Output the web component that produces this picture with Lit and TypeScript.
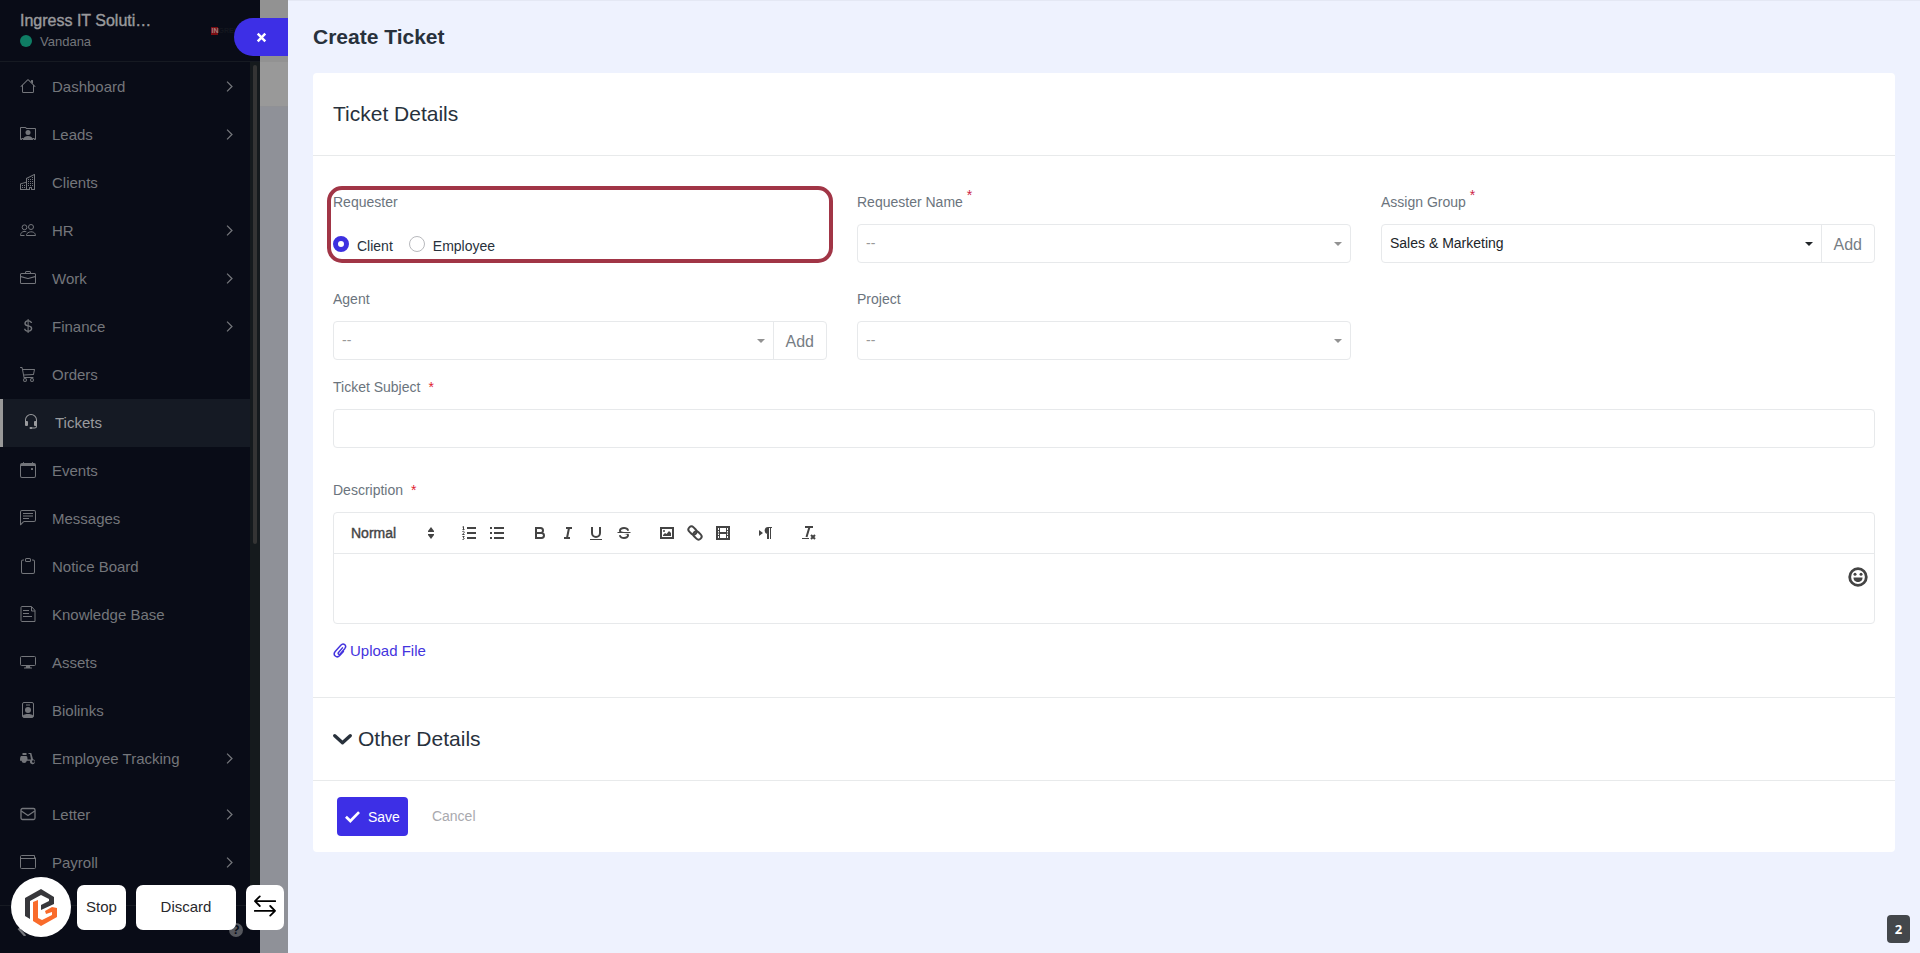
import { LitElement, html, css, svg, nothing } from "lit";
import { customElement, property } from "lit/decorators.js";
import { classMap } from "lit/directives/class-map.js";

const icons: Record<string, unknown> = {
  house: svg`<path fill-rule="evenodd" d="M2 13.5V7h1v6.500a.5.5 0 0 0 .5.5h9a.5.5 0 0 0 .5-.5V7h1v6.500a1.500 1.500 0 0 1-1.500 1.500h-9A1.500 1.500 0 0 1 2 13.500zm11-11V6l-2-2V2.500a.5.5 0 0 1 .5-.5h1a.5.5 0 0 1 .5.5z"/><path d="M7.293 1.500a1 1 0 0 1 1.414 0l6.647 6.646a.5.5 0 0 1-.708.708L8 2.207 1.354 8.854a.5.5 0 1 1-.708-.708z"/>`,
  leads: svg`<path d="M8 9.050a2.500 2.500 0 1 0 0-5 2.500 2.500 0 0 0 0 5Z"/><path d="M1 1a1 1 0 0 0-1 1v11a1 1 0 0 0 1 1h.5a.5.5 0 0 0 .5-.5.5.5 0 0 1 1 0 .5.5 0 0 0 .5.5h9a.5.5 0 0 0 .5-.5.5.5 0 0 1 1 0 .5.5 0 0 0 .5.5h.5a1 1 0 0 0 1-1V3a1 1 0 0 0-1-1H6.707L6 1.293A1 1 0 0 0 5.293 1H1Zm0 1h4.293L6 2.707A1 1 0 0 0 6.707 3H15v10h-.085a1.500 1.500 0 0 0-2.400-.63C11.885 11.223 10.554 10 8 10c-2.555 0-3.886 1.224-4.514 2.370a1.500 1.500 0 0 0-2.400.63H1V2Z"/>`,
  building: svg`<path fill-rule="evenodd" d="M14.763.075A.5.5 0 0 1 15 .5v15a.5.5 0 0 1-.5.5h-3a.5.5 0 0 1-.5-.5V14h-1v1.500a.5.5 0 0 1-.5.5h-9a.5.5 0 0 1-.5-.5V10a.5.5 0 0 1 .342-.474L6 7.640V4.500a.5.5 0 0 1 .276-.447l8-4a.5.5 0 0 1 .487.022zM6 8.694 1 10.360V15h5V8.694zM7 15h2v-1.500a.5.5 0 0 1 .5-.5h2a.5.5 0 0 1 .5.5V15h2V1.309l-7 3.500V15z"/><path d="M2 11h1v1H2v-1zm2 0h1v1H4v-1zm-2 2h1v1H2v-1zm2 0h1v1H4v-1zm4-4h1v1H8V9zm2 0h1v1h-1V9zm-2 2h1v1H8v-1zm2 0h1v1h-1v-1zm2-2h1v1h-1V9zm0 2h1v1h-1v-1zM8 7h1v1H8V7zm2 0h1v1h-1V7zm2 0h1v1h-1V7zM8 5h1v1H8V5zm2 0h1v1h-1V5zm2 0h1v1h-1V5zm0-2h1v1h-1V3z"/>`,
  people: svg`<g fill="none" stroke="currentColor"><circle cx="4.500" cy="5.300" r="2.400"/><circle cx="11" cy="5" r="2.500"/><path d="M6.500 13.500c-.6-3.800 8.400-6 9 0zM6.300 9.700C3 8.800.5 10.500.5 13.500h4"/></g>`,
  briefcase: svg`<path d="M6.500 1A1.500 1.500 0 0 0 5 2.500V3H1.500A1.500 1.500 0 0 0 0 4.500v8A1.500 1.500 0 0 0 1.500 14h13a1.500 1.500 0 0 0 1.500-1.500v-8A1.500 1.500 0 0 0 14.500 3H11v-.5A1.500 1.500 0 0 0 9.500 1h-3zm0 1h3a.5.5 0 0 1 .5.5V3H6v-.5a.5.5 0 0 1 .5-.5zm1.886 6.914L15 7.151V12.500a.5.5 0 0 1-.5.5h-13a.5.5 0 0 1-.5-.5V7.150l6.614 1.764a1.500 1.500 0 0 0 .772 0zM1.500 4h13a.5.5 0 0 1 .5.5v1.616L8.129 7.948a.5.5 0 0 1-.258 0L1 6.116V4.500a.5.5 0 0 1 .5-.5z"/>`,
  dollar: svg`<path d="M4 10.781c.148 1.667 1.513 2.850 3.591 3.003V15h1.043v-1.216c2.270-.179 3.678-1.438 3.678-3.300 0-1.590-.947-2.510-2.956-3.028l-.722-.187V3.467c1.122.110 1.879.714 2.070 1.616h1.470c-.166-1.600-1.540-2.748-3.540-2.875V1H7.591v1.233c-1.939.230-3.270 1.472-3.270 3.156 0 1.454.966 2.483 2.661 2.917l.610.162v4.031c-1.149-.170-1.940-.800-2.131-1.718H4zm3.391-3.836c-1.043-.263-1.600-.825-1.600-1.616 0-.944.704-1.641 1.800-1.828v3.495l-.2-.05zm1.591 1.872c1.287.323 1.852.859 1.852 1.769 0 1.097-.826 1.828-2.200 1.939V8.730l.348.086z"/>`,
  cart: svg`<path d="M0 1.500A.5.5 0 0 1 .5 1H2a.5.5 0 0 1 .485.379L2.890 3H14.500a.5.5 0 0 1 .490.598l-1 5a.5.5 0 0 1-.465.401l-9.397.472L4.415 11H13a.5.5 0 0 1 0 1H4a.5.5 0 0 1-.491-.408L2.010 3.607 1.610 2H.5a.5.5 0 0 1-.5-.5zM3.102 4l.840 4.479 9.144-.459L13.890 4H3.102zM5 12a2 2 0 1 0 0 4 2 2 0 0 0 0-4zm7 0a2 2 0 1 0 0 4 2 2 0 0 0 0-4zm-7 1a1 1 0 1 1 0 2 1 1 0 0 1 0-2zm7 0a1 1 0 1 1 0 2 1 1 0 0 1 0-2z"/>`,
  headset: svg`<path d="M8 1a5 5 0 0 0-5 5v1h1a1 1 0 0 1 1 1v3a1 1 0 0 1-1 1H3a1 1 0 0 1-1-1V6a6 6 0 1 1 12 0v6a2.500 2.500 0 0 1-2.500 2.500H9.366a1 1 0 0 1-.866.5h-1a1 1 0 1 1 0-2h1a1 1 0 0 1 .866.5H11.500A1.500 1.500 0 0 0 13 12h-1a1 1 0 0 1-1-1V8a1 1 0 0 1 1-1h1V6a5 5 0 0 0-5-5z"/>`,
  calendar: svg`<path d="M11 6.500a.5.5 0 0 1 .5-.5h1a.5.5 0 0 1 .5.5v1a.5.5 0 0 1-.5.5h-1a.5.5 0 0 1-.5-.5v-1z"/><path d="M3.500 0a.5.5 0 0 1 .5.5V1h8V.5a.5.5 0 0 1 1 0V1h1a2 2 0 0 1 2 2v11a2 2 0 0 1-2 2H2a2 2 0 0 1-2-2V3a2 2 0 0 1 2-2h1V.5a.5.5 0 0 1 .5-.5zM1 4v10a1 1 0 0 0 1 1h12a1 1 0 0 0 1-1V4H1z"/>`,
  chat: svg`<path d="M14 1a1 1 0 0 1 1 1v8a1 1 0 0 1-1 1H4.414A2 2 0 0 0 3 11.586l-2 2V2a1 1 0 0 1 1-1h12zM2 0a2 2 0 0 0-2 2v12.793a.5.5 0 0 0 .854.353l2.853-2.853A1 1 0 0 1 4.414 12H14a2 2 0 0 0 2-2V2a2 2 0 0 0-2-2H2z"/><path d="M3 3h10v1H3zM3 5.500h10v1H3zM3 8h6v1H3z"/>`,
  clipboard: svg`<path d="M4 1.500H3a2 2 0 0 0-2 2V14a2 2 0 0 0 2 2h10a2 2 0 0 0 2-2V3.500a2 2 0 0 0-2-2h-1v1h1a1 1 0 0 1 1 1V14a1 1 0 0 1-1 1H3a1 1 0 0 1-1-1V3.500a1 1 0 0 1 1-1h1v-1z"/><path d="M9.500 1a.5.5 0 0 1 .5.5v1a.5.5 0 0 1-.5.5h-3a.5.5 0 0 1-.5-.5v-1a.5.5 0 0 1 .5-.5h3zm-3-1A1.500 1.500 0 0 0 5 1.500v1A1.500 1.500 0 0 0 6.500 4h3A1.500 1.500 0 0 0 11 2.500v-1A1.500 1.500 0 0 0 9.500 0h-3z"/>`,
  doc: svg`<g fill="none" stroke="currentColor"><path d="M2 .5h9.500l3.500 4v11H2a1 1 0 0 1-1-1v-13a1 1 0 0 1 1-1z"/><path d="M11.500.8V5H15M3 4.500h6M3 7.500h6M3 10.500h9"/></g>`,
  display: svg`<path fill="none" stroke="currentColor" d="M1.500 2.500h13a1 1 0 0 1 1 1v7a1 1 0 0 1-1 1h-13a1 1 0 0 1-1-1v-7a1 1 0 0 1 1-1z"/><path d="M6 12h4l.3 1.500H12v1H4v-1h1.700z"/>`,
  badge: svg`<rect x="2.500" y=".5" width="11" height="15" rx="1.500" fill="none" stroke="currentColor"/><path d="M6 2.500h4v1H6zM3 13.500c1-2 9-2 10 0V15H3z"/><circle cx="8" cy="8" r="3"/>`,
  scooter: svg`<path d="M2.500 3h4v2h-4zM1 6h5c1.200 0 1.500 1 1.500 3.500H11L10 4H8.500V3h2.800L13 9.200a2.500 2.500 0 1 1-2.800 1.500H6.800a2.700 2.700 0 0 1-5.300 0H0C0 8 .2 7 1 6z"/><circle cx="13.300" cy="11.500" r="1.300" fill="#090c17"/>`,
  letter: svg`<g fill="none" stroke="currentColor" stroke-width="1.300"><rect x="1" y="2.500" width="14" height="11" rx="1.500"/><path d="m1.300 5 6.700 4.500L14.700 5"/></g>`,
  payroll: svg`<path fill="none" stroke="currentColor" d="M15.500 3.500v10a1 1 0 0 1-1 1h-13a1 1 0 0 1-1-1v-11a1 1 0 0 1 1-1h13v3M.5 4.500h15"/>`,
  chevron: svg`<path fill="none" stroke="currentColor" stroke-width="1.600" d="m5 2 6 6-6 6"/>`,
  collapse: svg`<path fill="none" stroke="currentColor" stroke-width="3" d="M11 2 3 7l8 9"/>`,
  close: svg`<path fill="none" stroke="currentColor" stroke-width="3.600" d="m2.500 2.500 11 11M13.500 2.500l-11 11"/>`,
  arrows: svg`<path fill="none" stroke="currentColor" stroke-width="1.300" stroke-linecap="round" stroke-linejoin="round" d="M15.500 4.500H.8m3.400-3.500L.7 4.500l3.500 3.500M.5 11.500h14.700M11.800 8l3.500 3.500-3.500 3.500"/>`,
  clip: svg`<path fill="none" stroke="currentColor" stroke-width="1.700" stroke-linecap="round" stroke-linejoin="round" d="M10.800 5 6.300 10.200c-1.200 1.600 .7 3 1.900 1.700l5.200-6c3-3.800-1.600-7.200-4.500-4L2.500 9.200c-3.200 4 1.700 8.200 5.200 4.600l4.200-4.700"/>`,
  down: svg`<path fill="none" stroke="currentColor" stroke-width="2.800" stroke-linecap="round" stroke-linejoin="round" d="m1.500 4.800 6.500 6 6.500-6"/>`,
  check: svg`<path fill="none" stroke="currentColor" stroke-width="2.900" d="m1 8.300 4.700 4.500L15 3.300"/>`,
};

const quill: Record<string, unknown> = {
  ordered: svg`<path class="st" d="M7 4h9M7 9h9M7 14h9"/><path class="st thin" d="M2.500 5.500h2M3.500 5.500v-3l-1 .5M2.400 7.500c2-.8 2.500.8 1 2l-1 1h2.200M2.500 12.500h1.700l-1 1.400c1.500 0 1.500 1.800-.7 1.600"/>`,
  bullet: svg`<path class="st" d="M6 4h10M6 9h10M6 14h10M2 4h2M2 9h2M2 14h2"/>`,
  bold: svg`<path class="st" d="M5 4h4.500a2.500 2.500 0 0 1 0 5H5zM5 9h5.500a2.500 2.500 0 0 1 0 5H5z"/>`,
  italic: svg`<path class="st" d="M7 4h6M5 14h6M8 14l2-10"/>`,
  underline: svg`<path class="st" d="M5 3v6a4 4 0 0 0 8 0V3"/><path class="st thin" d="M3 15.500h12"/>`,
  strike: svg`<path class="st thin" d="M15.500 8.500h-13"/><path class="fl" d="M9.007 8C6.542 7.791 6 7.519 6 6.500 6 5.792 7.283 5 9 5c1.571 0 2.765.679 2.969 1.309a1 1 0 0 0 1.900-.617C13.356 4.106 11.354 3 9 3 6.200 3 4 4.538 4 6.500a3.200 3.200 0 0 0 .5 1.843ZM8.984 10C11.457 10.208 12 10.479 12 11.500c0 .708-1.283 1.500-3 1.500-1.571 0-2.765-.679-2.969-1.309a1 1 0 1 0-1.900.617C4.644 13.894 6.646 15 9 15c2.800 0 5-1.538 5-3.500a3.200 3.200 0 0 0-.5-1.843Z"/>`,
  image: svg`<rect class="st" x="3" y="4" width="12" height="10"/><circle class="fl" cx="6" cy="7" r="1"/><path class="fl" d="M5 12v-1l2-2 1.500 1L11 7l2 2v3z"/>`,
  link: svg`<g transform="rotate(45 9 9)"><rect class="st" x="1" y="6" width="9" height="6" rx="3"/><rect class="st" x="8" y="6" width="9" height="6" rx="3"/></g>`,
  video: svg`<rect class="st" x="3" y="3" width="12" height="12"/><path class="st thin" d="M5.500 3v12M12.500 3v12M3 6.500h2M3 9h2M3 11.500h2M13 6.500h2M13 9h2M13 11.500h2"/><path class="fl" d="M5 8h8v2H5z"/>`,
  direction: svg`<path class="fl" d="M2 6v6l4-3zM11 4a3 3 0 0 0 0 6zM15 3H11a3.500 3.500 0 0 0-1 6.800V15h2V4h1v11h1V4h1z"/>`,
  clean: svg`<path class="st" d="M5 3h8M6.500 13 9.500 3"/><path class="st thin" d="M2 14.500h7"/><path class="st" d="m11 11 4 4M15 11l-4 4"/>`,
};

@customElement("ui-icon")
export class UiIcon extends LitElement {
  @property() name = "";
  static styles = css`
    :host { display: inline-flex; flex: none; width: 16px; height: 16px; }
    svg { width: 100%; height: 100%; display: block; }
  `;
  render() {
    return html`<svg viewBox="0 0 16 16" fill="currentColor" aria-hidden="true">${icons[this.name]}</svg>`;
  }
}

type Item = { icon: string; text: string; more?: boolean; active?: boolean; spaced?: boolean };
const menu: Item[] = [
  { icon: "house", text: "Dashboard", more: true },
  { icon: "leads", text: "Leads", more: true },
  { icon: "building", text: "Clients" },
  { icon: "people", text: "HR", more: true },
  { icon: "briefcase", text: "Work", more: true },
  { icon: "dollar", text: "Finance", more: true },
  { icon: "cart", text: "Orders" },
  { icon: "headset", text: "Tickets", active: true },
  { icon: "calendar", text: "Events" },
  { icon: "chat", text: "Messages" },
  { icon: "clipboard", text: "Notice Board" },
  { icon: "doc", text: "Knowledge Base" },
  { icon: "display", text: "Assets" },
  { icon: "badge", text: "Biolinks" },
  { icon: "scooter", text: "Employee Tracking", more: true },
  { icon: "letter", text: "Letter", more: true, spaced: true },
  { icon: "payroll", text: "Payroll", more: true },
];

@customElement("app-sidebar")
export class AppSidebar extends LitElement {
  static styles = css`
    :host { display: flex; flex-direction: column; flex: none; width: 260px; height: 100%; overflow: hidden; background: #090c17; color: #74767b; font-size: 15px; }
    .head { display: flex; align-items: center; justify-content: space-between; height: 62px; box-sizing: border-box; flex: none; padding: 0 17px 0 20px; border-bottom: 1px solid #161a22; }
    .company { color: #999a9d; font-size: 16px; line-height: 21px; white-space: nowrap; -webkit-text-stroke: 0.4px currentColor; }
    .user { display: flex; align-items: center; gap: 8px; font-size: 13px; line-height: 21px; }
    .dot { width: 12px; height: 12px; border-radius: 50%; background: #0f7d64; }
    .logo { display: flex; align-items: center; font-size: 7px; line-height: 8px; font-weight: bold; color: #14171f; }
    .logo b { background: #7b0d12; color: #a08080; }
    .scroll { display: flex; flex: 1; min-height: 0; }
    nav { flex: 1; overflow: hidden; padding-top: 1px; }
    a { display: flex; align-items: center; gap: 16px; height: 48px; padding: 0 12px 2px 20px; box-sizing: border-box; color: inherit; text-decoration: none; }
    a span { flex: 1; }
    a.active { background: #151a24; color: #9a9b9e; border-left: 3px solid #999; }
    a.spaced { margin-top: 8px; }
    .more { width: 13px; height: 13px; padding-right: 2px; }
    .track { width: 10px; background: #151a1d; display: flex; justify-content: center; padding-top: 3px; box-sizing: border-box; }
    .thumb { width: 4px; height: 57%; border-radius: 2px; background: #343434; }
    .foot { display: flex; align-items: center; justify-content: space-between; height: 47px; flex: none; padding: 0 17px; border-top: 1px solid #161a22; }
    .foot ui-icon { width: 12px; height: 12px; }
    .help { width: 14px; height: 14px; border-radius: 50%; background: #55575d; color: #090c17; font-size: 12px; line-height: 14px; text-align: center; font-weight: bold; }
  `;
  render() {
    return html`
      <div class="head">
        <div>
          <div class="company">Ingress IT Soluti…</div>
          <div class="user"><i class="dot"></i>Vandana</div>
        </div>
        <div class="logo"><b>IN</b>GRESS</div>
      </div>
      <div class="scroll">
        <nav>
          ${menu.map(
            (m) => html`<a href="#" class=${classMap({ active: !!m.active, spaced: !!m.spaced })}>
              <ui-icon name=${m.icon}></ui-icon><span>${m.text}</span>
              ${m.more ? html`<ui-icon class="more" name="chevron"></ui-icon>` : nothing}
            </a>`
          )}
        </nav>
        <div class="track"><div class="thumb"></div></div>
      </div>
      <div class="foot"><ui-icon name="collapse"></ui-icon><span class="help">?</span></div>
    `;
  }
}

@customElement("ticket-form")
export class TicketForm extends LitElement {
  static styles = css`
    :host { display: block; background: #fff; border-radius: 4px; }
    h2 { display: flex; align-items: center; gap: 6px; height: 82px; margin: 0; padding: 0 20px; font-size: 21px; font-weight: 400; color: #28313c; }
    h2 ui-icon { width: 19px; height: 19px; }
    .body { padding: 36px 20px; border: solid #e8eaeb; border-width: 1px 0; }
    .grid { display: grid; grid-template-columns: repeat(3, minmax(0, 1fr)); gap: 26px 30px; }
    .label { display: flex; width: fit-content; gap: 8px; margin-bottom: 11px; font-size: 14px; line-height: 21px; color: #6b747d; }
    .label i { font-style: normal; color: #e0222f; }
    .label.raised { gap: 4px; }
    .label.raised i { color: #cc2247; line-height: 6px; }
    .subject { margin-top: 17px; }
    .description { margin-top: 32px; }
    .requester { position: relative; }
    .requester::after { content: ""; position: absolute; inset: -6px -6px 0; border: 4px solid #a13546; border-radius: 15px; pointer-events: none; }
    .radios { display: flex; gap: 16px; padding-top: 12px; font-size: 14px; line-height: 20px; color: #28313c; }
    .radios label { display: flex; gap: 8px; align-items: flex-end; }
    .radios input { appearance: none; width: 16px; height: 16px; margin: 0 0 4px; border: 1px solid #b8b9bd; border-radius: 50%; background: #fff; }
    .radios input:checked { border: 5px solid #3d30e0; }
    .control { display: flex; height: 39px; box-sizing: border-box; border: 1px solid #e7e9eb; border-radius: 4px; background: #fff; }
    .pick { display: grid; flex: 1; align-items: center; }
    .pick > * { grid-area: 1 / 1; }
    select { appearance: none; width: 100%; height: 100%; border: 0; background: none; padding: 0 30px 2px 8px; font: inherit; font-size: 14px; color: #999; }
    .filled select { color: #212529; }
    .caret { justify-self: end; margin-right: 8px; border: solid transparent; border-width: 4px 4px 0; border-top-color: #929292; pointer-events: none; }
    .filled .caret { border-top-color: #212529; }
    button { font: inherit; cursor: pointer; border: 0; background: none; padding: 0; }
    .add { flex: none; padding: 3px 12px 0; border-left: 1px solid #e7e9eb; color: #767d84; font-size: 16px; }
    input.text { display: block; width: 100%; height: 39px; box-sizing: border-box; border: 1px solid #e7e9eb; border-radius: 4px; padding: 0 8px; font: inherit; font-size: 14px; }
    .editor { border: 1px solid #e7e9eb; border-radius: 4px; }
    .tools { display: flex; gap: 15px; padding: 8px; height: 24px; border-bottom: 1px solid #e7e9eb; color: #444; }
    .format { display: grid; align-items: center; width: 98px; }
    .format > * { grid-area: 1 / 1; }
    .format select { color: #444; padding: 0 20px 0 9px; -webkit-text-stroke: 0.4px currentColor; }
    .format svg { justify-self: end; pointer-events: none; width: 18px; height: 18px; }
    .group { display: flex; }
    .group button { width: 28px; height: 24px; padding: 3px 5px; box-sizing: border-box; color: #444; }
    .group svg { display: block; width: 18px; height: 18px; }
    .st { fill: none; stroke: currentColor; stroke-width: 2; }
    .thin { stroke-width: 1; }
    .fl { fill: currentColor; }
    .area { display: flex; height: 69px; }
    textarea { flex: 1; min-width: 0; border: 0; outline: 0; resize: none; background: none; font: inherit; padding: 12px 15px; box-sizing: border-box; }
    .emoji { align-self: flex-start; margin: 13px 6px 0 0; width: 20px; height: 20px; color: #444; }
    .emoji svg { display: block; }
    .upload { display: flex; align-items: center; gap: 3px; width: fit-content; margin-top: 16px; font-size: 15px; line-height: 21px; color: #4434de; text-decoration: none; }
    .upload ui-icon { width: 14px; height: 15px; }
    .foot { display: flex; align-items: center; gap: 24px; padding: 16px 24px; border-top: 1px solid #e8eaeb; font-size: 14px; }
    .save { display: flex; align-items: center; gap: 8px; height: 39px; padding: 0 8px; border-radius: 4px; background: #3d2fe6; color: #fff; font-size: 14px; }
    .save ui-icon { width: 15px; height: 15px; }
    .cancel { color: #a9a9ae; text-decoration: none; padding-bottom: 2px; }
  `;

  private picker(id: string, label: string, value: string, opts: { required?: boolean; add?: boolean; filled?: boolean } = {}) {
    return html`<div>
      <label class="label raised" for=${id}>${label}${opts.required ? html`<i>*</i>` : nothing}</label>
      <div class=${classMap({ control: true, filled: !!opts.filled })}>
        <div class="pick"><select id=${id}><option>${value}</option></select><span class="caret"></span></div>
        ${opts.add ? html`<button class="add" type="button">Add</button>` : nothing}
      </div>
    </div>`;
  }

  private tools(names: string[]) {
    return html`<div class="group">
      ${names.map((n) => html`<button type="button" aria-label=${n}><svg viewBox="0 0 18 18">${quill[n]}</svg></button>`)}
    </div>`;
  }

  render() {
    return html`<form>
      <h2>Ticket Details</h2>
      <div class="body">
        <div class="grid">
          <div class="requester" role="radiogroup" aria-labelledby="requester">
            <span class="label" id="requester">Requester</span>
            <div class="radios">
              <label><input type="radio" name="requester" checked />Client</label>
              <label><input type="radio" name="requester" />Employee</label>
            </div>
          </div>
          ${this.picker("name", "Requester Name", "--", { required: true })}
          ${this.picker("group", "Assign Group", "Sales & Marketing", { required: true, add: true, filled: true })}
          ${this.picker("agent", "Agent", "--", { add: true })}
          ${this.picker("project", "Project", "--")}
        </div>
        <div class="subject">
          <label class="label" for="subject">Ticket Subject <i>*</i></label>
          <input class="text" id="subject" type="text" />
        </div>
        <div class="description">
          <label class="label" for="description">Description <i>*</i></label>
          <div class="editor">
            <div class="tools">
              <div class="format">
                <select aria-label="Text style"><option>Normal</option></select>
                <svg viewBox="0 0 18 18"><path class="fl" d="M6 7 9 3l3 4v1H6zM6 11l3 4 3-4v-1H6z" /></svg>
              </div>
              ${this.tools(["ordered", "bullet"])}
              ${this.tools(["bold", "italic", "underline", "strike"])}
              ${this.tools(["image", "link", "video"])}
              ${this.tools(["direction"])}
              ${this.tools(["clean"])}
            </div>
            <div class="area">
              <textarea id="description"></textarea>
              <button class="emoji" type="button" aria-label="Insert emoji">
                <svg viewBox="0 0 20 20" width="20" height="20">
                  <circle cx="10" cy="10" r="8.300" fill="none" stroke="currentColor" stroke-width="2.800" />
                  <circle cx="7" cy="7.300" r="1.500" class="fl" /><circle cx="13" cy="7.300" r="1.500" class="fl" />
                  <path class="fl" d="M5.500 10.500h9c.3 6-9.300 6-9 0z" />
                </svg>
              </button>
            </div>
          </div>
        </div>
        <a class="upload" href="#"><ui-icon name="clip"></ui-icon>Upload File</a>
      </div>
      <h2><ui-icon name="down"></ui-icon>Other Details</h2>
      <div class="foot">
        <button class="save" type="button"><ui-icon name="check"></ui-icon>Save</button>
        <a class="cancel" href="#">Cancel</a>
      </div>
    </form>`;
  }
}

@customElement("app-root")
export class AppRoot extends LitElement {
  static styles = css`
    :host { position: relative; display: flex; height: 100vh; overflow: hidden; font-family: "Liberation Sans", Arial, sans-serif; }
    .dimmed { flex: none; width: 28px; background: #8f9198; }
    .topbar { height: 62px; background: #929292; }
    .filter { height: 44px; background: #999; border-bottom: 1px solid #909195; }
    main { position: relative; flex: 1; min-width: 0; padding: 0 25px; background: #eef2fe; border-top: 1px solid #e4e8f4; box-sizing: border-box; }
    h1 { margin: 0; font-size: 21px; line-height: 72px; color: #28313c; }
    button { font: inherit; font-size: 15px; border: 0; padding: 0; cursor: pointer; color: #28282c; }
    .close { position: absolute; top: 17px; right: 100%; width: 54px; height: 38px; border-radius: 19px 0 0 19px; background: #3d2fe6; color: #fff; }
    .close ui-icon { width: 11px; height: 11px; }
    .recorder { position: absolute; left: 11px; bottom: 16px; display: flex; align-items: center; gap: 10px; }
    .recorder button { height: 45px; padding-bottom: 2px; border-radius: 7px; background: #fff; }
    .mark { display: flex; width: 60px; height: 60px; margin-right: -4px; border-radius: 50%; background: #fff; align-items: center; justify-content: center; }
    .stop { width: 49px; }
    .discard { width: 100px; }
    .swap { width: 38px; }
    .swap ui-icon { width: 22px; height: 22px; color: #000; vertical-align: middle; }
    .count { position: absolute; right: 10px; bottom: 10px; width: 23px; height: 28px; border-radius: 4px; background: #43474b; color: #fff; font: bold 13px/28px "Noto Sans", sans-serif; text-align: center; }
  `;
  render() {
    return html`
      <app-sidebar></app-sidebar>
      <div class="dimmed"><div class="topbar"></div><div class="filter"></div></div>
      <main>
        <button class="close" aria-label="Close"><ui-icon name="close"></ui-icon></button>
        <h1>Create Ticket</h1>
        <ticket-form></ticket-form>
        <span class="count">2</span>
      </main>
      <div class="recorder">
        <span class="mark">
          <svg width="32" height="37" viewBox="0 0 32 37">
            <path fill="#37373b" d="M0 9 16 0l13 8v7l-13 6v-5l8-4v-2l-8-4L5 12v18l-5-3z" />
            <path fill="#f96b2b" d="m8 13 5-2v18l4 2 10-5v-3l-6 2-1-3 7-4 5 1v9l-16 9-8-5z" />
          </svg>
        </span>
        <button class="stop">Stop</button>
        <button class="discard">Discard</button>
        <button class="swap" aria-label="Switch side"><ui-icon name="arrows"></ui-icon></button>
      </div>
    `;
  }
}
